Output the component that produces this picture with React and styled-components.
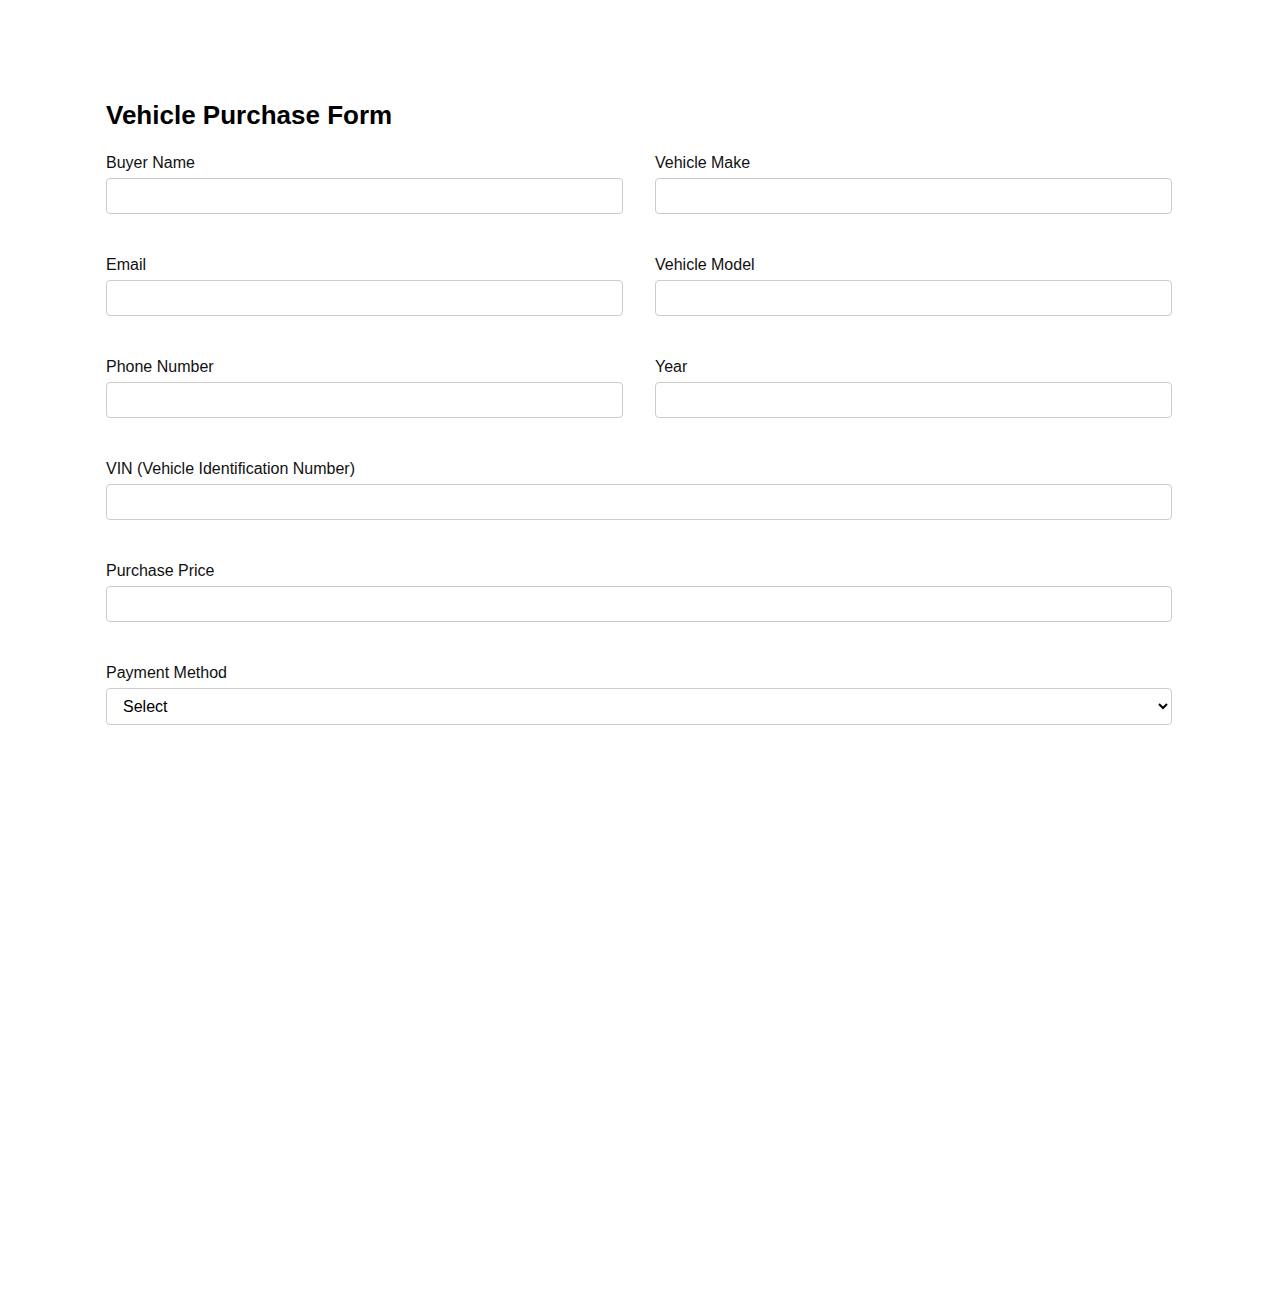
import styled, { createGlobalStyle } from "styled-components";

const GlobalStyle = createGlobalStyle`
  body {
    margin: 0;
    background: #ffffff;
    font-family: "Liberation Sans", Arial, sans-serif;
    color: #111;
  }
`;

const Page = styled.div`
  max-width: 1066px;
  margin: 0 auto;
  padding-top: 100px;
`;

const Title = styled.h2`
  margin: 0 0 24px;
  font-size: 26px;
  line-height: 30px;
  font-weight: 700;
  color: #000;
`;

const FormGrid = styled.form`
  display: grid;
  grid-template-columns: 1fr 1fr;
  column-gap: 32px;
  row-gap: 42px;
`;

const Field = styled.div`
  display: flex;
  flex-direction: column;
  grid-column: ${(p) => (p.$wide ? "1 / -1" : "auto")};
`;

const Label = styled.label`
  font-size: 16px;
  line-height: 18px;
  margin-bottom: 6px;
  color: #111;
`;

const Input = styled.input`
  box-sizing: border-box;
  height: 36px;
  padding: 8px 12px;
  border: 1px solid #cccccc;
  border-radius: 4px;
  font-family: inherit;
  font-size: 16px;
  outline: none;
`;

const Select = styled.select`
  box-sizing: border-box;
  height: 37px;
  padding: 8px 12px;
  border: 1px solid #cccccc;
  border-radius: 4px;
  background: #fff;
  font-family: inherit;
  font-size: 16px;
  color: #000;
`;

const fields = [
  { label: "Buyer Name", id: "buyer" },
  { label: "Vehicle Make", id: "make" },
  { label: "Email", id: "email", type: "email" },
  { label: "Vehicle Model", id: "model" },
  { label: "Phone Number", id: "phone", type: "tel" },
  { label: "Year", id: "year" },
  { label: "VIN (Vehicle Identification Number)", id: "vin", wide: true },
  { label: "Purchase Price", id: "price", wide: true },
];

export default function App() {
  return (
    <>
      <GlobalStyle />
      <Page>
        <Title>Vehicle Purchase Form</Title>
        <FormGrid>
          {fields.map((f) => (
            <Field key={f.id} $wide={f.wide}>
              <Label htmlFor={f.id}>{f.label}</Label>
              <Input id={f.id} type={f.type || "text"} />
            </Field>
          ))}
          <Field $wide>
            <Label htmlFor="payment">Payment Method</Label>
            <Select id="payment" defaultValue="">
              <option value="">Select</option>
              <option value="cash">Cash</option>
              <option value="finance">Finance</option>
              <option value="lease">Lease</option>
            </Select>
          </Field>
        </FormGrid>
      </Page>
    </>
  );
}
